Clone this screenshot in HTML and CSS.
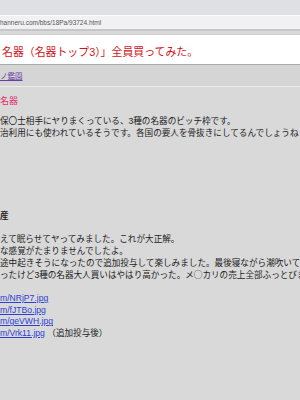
FILE: index.html
```html
<!DOCTYPE html>
<html lang="ja">
<head>
    <meta charset="UTF-8">
    <meta name="viewport" content="width=device-width, initial-scale=1.0">
    <title>名器（名器トップ3）」全員買ってみた。</title>
    <link rel="stylesheet" href="styles.css">
</head>
<body>
    <!-- Browser chrome -->
    <div class="chrome">
        <div class="tabs"></div>
        <div class="address">hanneru.com/bbs/18Pa/93724.html</div>
    </div>

    <!-- Thread title -->
    <div class="title">
        <h1>名器（名器トップ3）」全員買ってみた。</h1>
    </div>

    <div class="crumbs">
        <a href="#">ノ鑑園</a>
    </div>

    <!-- Post -->
    <div class="post">
        <h2>名器</h2>
        <p>
            保〇士相手にヤりまくっている、3種の名器のビッチ枠です。<br>
            治利用にも使われているそうです。各国の要人を骨抜きにしてるんでしょうね
        </p>

        <p class="gap"><b>産</b></p>

        <p>
            えて眠らせてヤってみました。これが大正解。<br>
            な感覚がたまりませんでしたよ。<br>
            途中起きそうになったので追加投与して楽しみました。最後寝ながら潮吹いて<br>
            ったけど3種の名器大人買いはやはり高かった。メ◯カリの売上全部ふっとびま
        </p>

        <ul class="links">
            <li><a href="#">m/NRjP7.jpg</a></li>
            <li><a href="#">m/fJTBo.jpg</a></li>
            <li><a href="#">m/geVWH.jpg</a></li>
            <li><a href="#">m/Vrk11.jpg</a> （追加投与後）</li>
        </ul>
    </div>
</body>
</html>
```

FILE: styles.css
```css
/* Global */
body {
    margin: 0;
    padding: 0;
    width: 300px;
    height: 400px;
    overflow: hidden;
    background: #d9d9d9;
    color: #222;
    font-family: "Liberation Sans", "Noto Sans CJK JP", sans-serif;
}

/* Browser chrome */
.chrome {
    border-bottom: 2px solid #c6c6c8;
}

.tabs {
    height: 15px;
    background: #dfe0e3;
}

.address {
    height: 13px;
    border-top: 1px solid #fbfbfc;
    background: #f1f1f3;
    color: #555;
    font-size: 6.5px;
    line-height: 14px;
    white-space: nowrap;
}

/* Title */
.title {
    margin-top: 3px;
    border-top: 1px solid #cfcfcf;
    border-bottom: 1px solid #a9a9a9;
    background: #fff;
    height: 29px;
    display: flex;
    align-items: center;
}

h1 {
    margin: 3px 0 0 2px;
    color: #d0141a;
    font-size: 10.9px;
    font-weight: normal;
    white-space: nowrap;
}

.crumbs {
    height: 21px;
    border-bottom: 1px solid #ececec;
    background: #d5d5d5;
    display: flex;
    align-items: center;
    font-size: 7.5px;
}

.crumbs a {
    color: #6a3ea8;
}

/* Post */
.post {
    font-size: 8.6px;
    line-height: 12px;
    white-space: nowrap;
}

h2 {
    margin: 8px 0 0;
    color: #e0306e;
    font-size: 9px;
    font-weight: normal;
    line-height: 12px;
}

p {
    margin: 8px 0 0;
}

.gap {
    margin-top: 71px;
}

.gap + p {
    margin-top: 11px;
}

.links {
    list-style: none;
    margin: 12px 0 0;
    padding: 0;
    line-height: 11.6px;
}

.links a {
    color: #2b3fd6;
}
```
